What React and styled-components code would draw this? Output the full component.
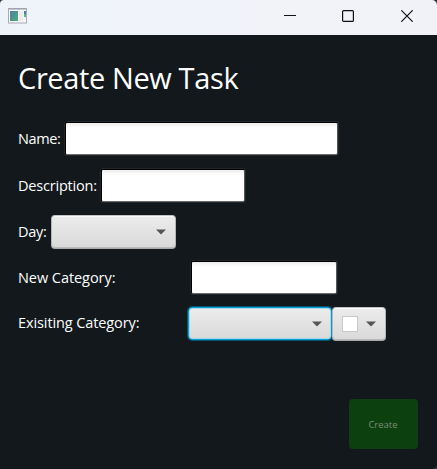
import React from "react";
import styled, { createGlobalStyle } from "styled-components";

const GlobalStyle = createGlobalStyle`
  * { box-sizing: border-box; }
  body { margin: 0; background: #30343a; overflow: hidden; }
`;

const Window = styled.div`
  width: 437px;
  height: 469px;
  display: flex;
  flex-direction: column;
  background: #12181c;
  border-radius: 4px 5px 5px 0;
  overflow: hidden;
  color: #fff;
  font-family: "Open Sans", "Noto Sans", sans-serif;
`;

const TitleBar = styled.header`
  height: 35px;
  flex: none;
  display: flex;
  align-items: flex-start;
  justify-content: space-between;
  padding: 0 1px 0 8px;
  background: linear-gradient(90deg, #eef3fa, #f1f3f9 60%, #f1f2f8);
`;

const AppIcon = styled.svg`
  width: 19px;
  height: 16px;
  margin-top: 8px;
`;

const Controls = styled.div`
  display: flex;
`;

const ControlButton = styled.button`
  width: 58.5px;
  height: 32px;
  padding: 0;
  border: 0;
  background: none;
  display: grid;
  place-items: center;
  color: #111;
`;

const Content = styled.main`
  flex: 1;
  display: flex;
  flex-direction: column;
  padding: 21px 19px 20px 18px;
`;

const Title = styled.h1`
  margin: 0 0 23px;
  height: 43px;
  line-height: 43px;
  font-size: 29px;
  font-weight: 400;
  letter-spacing: -0.38px;
  white-space: nowrap;
`;

const Row = styled.div`
  height: 33px;
  display: flex;
  align-items: center;
  margin-bottom: ${(p) => p.$gap}px;
`;

const Label = styled.label`
  width: ${(p) => p.$width}px;
  flex: none;
  padding-bottom: ${(p) => p.$lift || 0}px;
  font-size: 14.5px;
  line-height: 20px;
  letter-spacing: ${(p) => p.$tracking}px;
  white-space: nowrap;
`;

const TextField = styled.input`
  width: ${(p) => p.$width}px;
  height: 33px;
  padding: 0 8px;
  outline: 0;
  border: 1px solid;
  border-color: #000 #555 #696969 #000;
  border-radius: 2px;
  background: linear-gradient(#ececec, #fff 5px);
  box-shadow: 0 0 0 1px #20262a;
`;

const Combo = styled.button`
  width: ${(p) => p.$width}px;
  height: ${(p) => (p.$focused ? 33 : 34)}px;
  padding: 0 9px;
  display: flex;
  flex: none;
  align-items: center;
  align-self: flex-start;
  justify-content: flex-end;
  gap: 8px;
  border: 1px solid;
  border-color: ${(p) => (p.$focused ? "#039ed3" : "#c3c3c3 #b5b5b5 #a9a9a9")};
  border-radius: 4px;
  background: linear-gradient(#ececec, #d9d9d9);
  box-shadow: ${(p) =>
    p.$focused
      ? "inset 0 0 0 1px #a5d8ea, 0 0 0 1px rgba(3, 158, 211, 0.45)"
      : "inset 0 1px 0 #fafafa, inset 0 -1px 0 #b9b9b9"};
`;

const Swatch = styled.span`
  width: 16px;
  height: 16px;
  background: #fff;
  border: 1px solid #c8c8c8;
`;

const Footer = styled.footer`
  margin-top: auto;
  display: flex;
  justify-content: flex-end;
`;

const CreateButton = styled.button`
  width: 69px;
  height: 50px;
  margin-right: 0.5px;
  padding: 0;
  border: 0;
  border-radius: 4px;
  background: #0c400f;
  color: #7c8c78;
  font: 9.5px "Open Sans", "Noto Sans", sans-serif;
`;

const Arrow = () => (
  <svg width="10" height="6" viewBox="0 0 10 6">
    <path d="M0 0.5h10L5 5.5z" fill="#555" />
  </svg>
);

export default function App() {
  return (
    <>
      <GlobalStyle />
      <Window>
        <TitleBar>
          <AppIcon viewBox="0 0 19 16">
            <defs>
              <linearGradient id="pane" x1="0" y1="0" x2="1" y2="1">
                <stop offset="0" stopColor="#4b80a5" />
                <stop offset="1" stopColor="#55ad78" />
              </linearGradient>
            </defs>
            <rect x="0.5" y="0.5" width="18" height="14.5" fill="#f8f8f6" stroke="#a7adb6" />
            <path d="M1 1h17" stroke="#8f9caf" />
            <rect x="2" y="3" width="8" height="10" fill="url(#pane)" />
            <path d="M13 3v10" stroke="#ededeb" strokeWidth="4" />
            <path d="M17 3v3" stroke="#4d77bd" strokeWidth="2" />
            <path d="M17 6v3" stroke="#5cb586" strokeWidth="2" />
          </AppIcon>
          <Controls>
            <ControlButton aria-label="Minimize">
              <svg width="12" height="12" viewBox="0 0 12 12" stroke="currentColor">
                <path d="M0 5.5h12" />
              </svg>
            </ControlButton>
            <ControlButton aria-label="Maximize">
              <svg width="12" height="12" viewBox="0 0 12 12" fill="none" stroke="currentColor" strokeWidth="1.2">
                <rect x="0.6" y="0.6" width="10.8" height="10.8" rx="1" />
              </svg>
            </ControlButton>
            <ControlButton aria-label="Close">
              <svg width="12" height="12" viewBox="0 0 12 12" stroke="currentColor" strokeWidth="1.2">
                <path d="M0.3 0.3l11.4 11.4M11.7 0.3L0.3 11.7" />
              </svg>
            </ControlButton>
          </Controls>
        </TitleBar>
        <Content>
          <Title>Create New Task</Title>
          <Row $gap={14}>
            <Label $width={47} $tracking={-0.4}>Name:</Label>
            <TextField $width={273} />
          </Row>
          <Row $gap={13}>
            <Label $width={83} $tracking={-0.2}>Description:</Label>
            <TextField $width={144} />
          </Row>
          <Row $gap={13}>
            <Label $width={33} $tracking={-0.3}>Day:</Label>
            <Combo $width={125}><Arrow /></Combo>
          </Row>
          <Row $gap={13}>
            <Label $width={173} $tracking={-0.06}>New Category:</Label>
            <TextField $width={146} />
          </Row>
          <Row $gap={0}>
            <Label $width={170} $tracking={-0.1} $lift={2}>Exisiting Category:</Label>
            <Combo $width={144} $focused><Arrow /></Combo>
            <Combo $width={54}><Swatch /><Arrow /></Combo>
          </Row>
          <Footer>
            <CreateButton>Create</CreateButton>
          </Footer>
        </Content>
      </Window>
    </>
  );
}
